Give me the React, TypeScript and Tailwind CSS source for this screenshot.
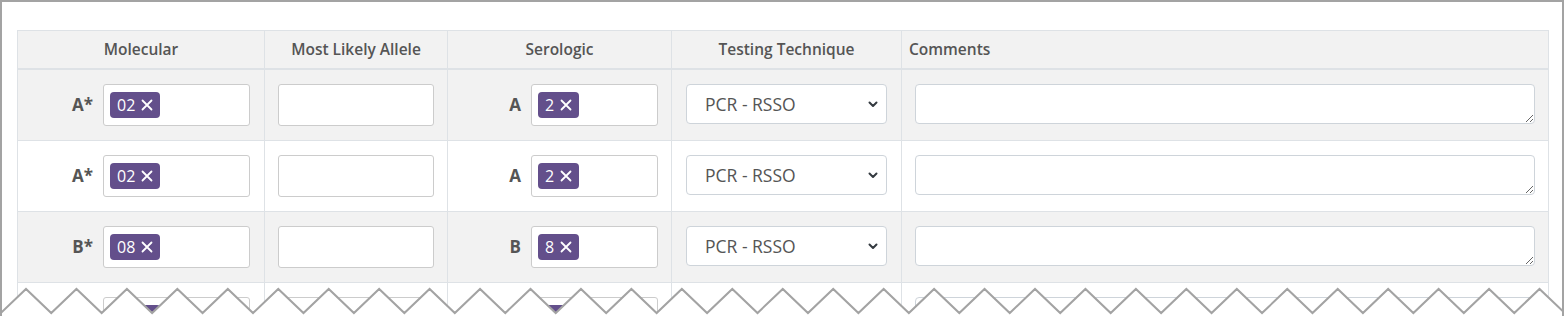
import React from "react";

const rows = [
  { mol: "A*", molTag: "02", sero: "A", seroTag: "2", striped: true },
  { mol: "A*", molTag: "02", sero: "A", seroTag: "2", striped: false },
  { mol: "B*", molTag: "08", sero: "B", seroTag: "8", striped: true },
  // last row sits under the torn edge, only its boxes peek through
  { mol: "", molTag: "", sero: "", seroTag: "", striped: false },
];

const Tag = ({ value, blank }: { value: string; blank?: string }) =>
  value ? (
    <span className="inline-flex items-center gap-[6px] h-[26px] px-[7px] rounded-[4px] bg-[#634f8b] text-white text-[16px] leading-none">
      {value}
      <svg width="12" height="12" viewBox="0 0 12 12" className="shrink-0">
        <path d="M1.5 1.5L10.5 10.5M10.5 1.5L1.5 10.5" stroke="white" strokeWidth="1.8" strokeLinecap="round" />
      </svg>
    </span>
  ) : (
    <span className={`inline-block h-[26px] ${blank} rounded-[4px] bg-[#634f8b]`} />
  );

const TagInput = ({ value, width, blank }: { value: string; width: string; blank: string }) => (
  <div className={`${width} h-[42px] flex items-center pl-[6px] bg-white border border-[#cccccc] rounded-[3px]`}>
    <Tag value={value} blank={blank} />
  </div>
);

// torn paper edge along the bottom of the shot
const TornEdge = () => {
  const pts: string[] = [];
  const period = 50.45;
  for (let k = -1; k <= 31; k++) {
    const peak = 24 + k * period;
    pts.push(`${peak - period / 2},33`);
    pts.push(`${peak},9`);
  }
  const line = pts.join(" ");
  return (
    <svg
      width="1564"
      height="36"
      viewBox="0 0 1564 36"
      className="absolute left-0 bottom-0 pointer-events-none"
    >
      <polygon points={`${line} 1600,40 -40,40`} fill="white" />
      <polyline points={line} fill="none" stroke="#a3a3a3" strokeWidth="2" />
    </svg>
  );
};

const cell = "border-r border-b border-[#dee2e6]";

export default function App() {
  return (
    <div
      className="relative w-[1564px] h-[316px] overflow-hidden bg-white border-t-2 border-l-2 border-r-2 border-[#a3a3a3] pt-[28px] pl-[15px] pr-[13px] text-[#555555]"
      style={{ fontFamily: '"Open Sans", "Noto Sans", sans-serif' }}
    >
      <div className="border-l border-t border-[#dee2e6]">
        {/* header */}
        <div className="grid grid-cols-[247px_183px_224px_230px_647px] bg-[#f2f2f2] text-[15.5px] font-semibold">
          {["Molecular", "Most Likely Allele", "Serologic", "Testing Technique"].map((h) => (
            <div
              key={h}
              className="h-[39px] flex items-center justify-center border-r border-b-2 border-[#dee2e6]"
            >
              {h}
            </div>
          ))}
          <div className="h-[39px] flex items-center pl-[7px] border-r border-b-2 border-[#dee2e6]">
            Comments
          </div>
        </div>

        {rows.map((r, i) => (
          <div
            key={i}
            className={`grid grid-cols-[247px_183px_224px_230px_647px] ${r.striped ? "bg-[#f2f2f2]" : "bg-white"}`}
          >
            <div className={`${cell} h-[71px] flex items-start justify-end gap-[10px] pt-[14px] pr-[14px]`}>
              <span className="h-[42px] flex items-center font-bold text-[17px]">{r.mol}</span>
              <TagInput value={r.molTag} width="w-[147px]" blank="w-[51px]" />
            </div>
            <div className={`${cell} h-[71px] pt-[14px] px-[13px]`}>
              <div className="w-full h-[42px] bg-white border border-[#cccccc] rounded-[3px]" />
            </div>
            <div className={`${cell} h-[71px] flex items-start justify-end gap-[10px] pt-[14px] pr-[13px]`}>
              <span className="h-[42px] flex items-center font-bold text-[17px]">{r.sero}</span>
              <TagInput value={r.seroTag} width="w-[127px]" blank="w-[42px]" />
            </div>
            <div className={`${cell} h-[71px] pt-[14px] px-[14px]`}>
              {r.mol && (
                <div className="relative w-full h-[40px]">
                  <select
                    defaultValue="rsso"
                    className="w-full h-[40px] appearance-none bg-white border border-[#ced4da] rounded-[4px] pl-[18px] text-[17.5px] text-[#555555] outline-none"
                    style={{ fontFamily: '"Open Sans", sans-serif' }}
                  >
                    <option value="rsso">PCR - RSSO</option>
                    <option value="sbt">PCR - SBT</option>
                    <option value="sso">PCR - SSO</option>
                  </select>
                  <svg
                    width="10"
                    height="7"
                    viewBox="0 0 10 7"
                    className="absolute right-[9px] top-[17px] pointer-events-none"
                  >
                    <path d="M1.5 1.5L5 5L8.5 1.5" fill="none" stroke="#343a40" strokeWidth="2" strokeLinecap="round" strokeLinejoin="round" />
                  </svg>
                </div>
              )}
            </div>
            <div className={`${cell} h-[71px] pt-[14px] px-[13px]`}>
              <textarea
                rows={1}
                className="block w-full h-[40px] bg-white border border-[#ced4da] rounded-[4px] outline-none"
              />
            </div>
          </div>
        ))}
      </div>
      <TornEdge />
    </div>
  );
}
